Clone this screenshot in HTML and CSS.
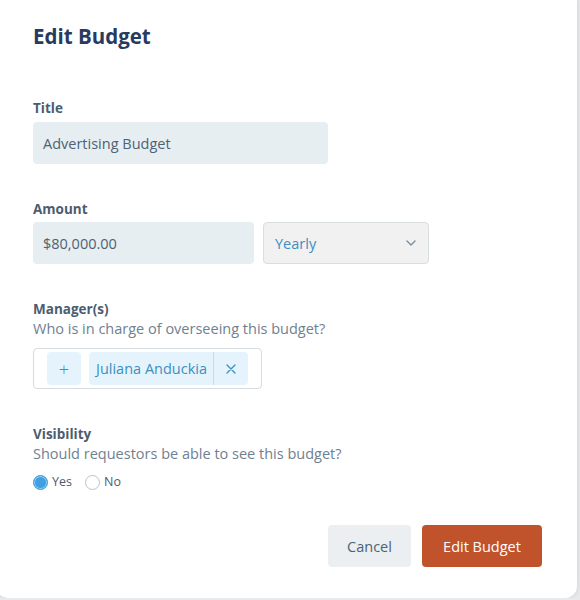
FILE: index.html
```html
<!DOCTYPE html>
<html lang="en">
<head>
  <meta charset="UTF-8" />
  <meta name="viewport" content="width=device-width, initial-scale=1.0"/>
  <title>Edit Budget</title>
  <link rel="stylesheet" href="styles.css">
</head>
<body>

  <!-- Edit budget dialog -->
  <div class="modal">
    <h2 class="modal-title">Edit Budget</h2>

    <div class="field">
      <label class="field-label">Title</label>
      <div class="input input-title">Advertising Budget</div>
    </div>

    <div class="field">
      <label class="field-label">Amount</label>
      <div class="amount-row">
        <div class="input input-amount">$80,000.00</div>
        <div class="select">
          <span>Yearly</span>
          <svg width="10" height="6" viewBox="0 0 10 6"><path d="M1 1l4 4 4-4" fill="none" stroke="#7d8c99" stroke-width="1.4" stroke-linecap="round" stroke-linejoin="round"/></svg>
        </div>
      </div>
    </div>

    <div class="field">
      <label class="field-label">Manager(s)</label>
      <p class="field-help">Who is in charge of overseeing this budget?</p>
      <div class="managers">
        <span class="chip chip-add">+</span>
        <span class="chip chip-person">
          <span class="chip-name">Juliana Anduckia</span>
          <span class="chip-remove">
            <svg width="10" height="10" viewBox="0 0 10 10"><path d="M1 1l8 8M9 1l-8 8" stroke="#3c8fbf" stroke-width="1.3" stroke-linecap="round"/></svg>
          </span>
        </span>
      </div>
    </div>

    <div class="field">
      <label class="field-label">Visibility</label>
      <p class="field-help">Should requestors be able to see this budget?</p>
      <div class="radios">
        <span class="radio"><span class="dot checked"></span>Yes</span>
        <span class="radio"><span class="dot"></span>No</span>
      </div>
    </div>

    <div class="actions">
      <button class="btn btn-cancel">Cancel</button>
      <button class="btn btn-primary">Edit Budget</button>
    </div>
  </div>

</body>
</html>
```

FILE: styles.css
```css
* {
  box-sizing: border-box;
}

body {
  margin: 0;
  font-family: 'Open Sans', 'Noto Sans', sans-serif;
  background-color: #e9eaeb;
  color: #4a5b6d;
  overflow: hidden;
}

/* Dialog */
.modal {
  width: 581px;
  height: 610px;
  margin: -12px 0 0 -4px;
  padding: 36px 0 0 37px;
  background-color: #fff;
  border-radius: 12px;
  box-shadow: 0 0 6px rgba(0, 0, 0, 0.12);
}

.modal-title {
  margin: 0;
  font-size: 20.5px;
  line-height: 24px;
  font-weight: 700;
  color: #283a5f;
}

/* Form fields */
.field {
  margin-top: 36px;
}

.modal-title + .field {
  margin-top: 51px;
}

.field-label {
  display: block;
  font-size: 13.5px;
  line-height: 18px;
  font-weight: 700;
  color: #4b5d6f;
}

.field-help {
  margin: 1px 0 0;
  font-size: 14.5px;
  line-height: 20px;
  color: #6f8191;
}

.input {
  margin-top: 5px;
  height: 42px;
  padding: 0 10px;
  display: flex;
  align-items: center;
  background-color: #e7eef2;
  border-radius: 4px;
  font-size: 14.5px;
  color: #4d6275;
}

.input-title {
  width: 295px;
}

.amount-row {
  display: flex;
  gap: 9px;
}

.input-amount {
  width: 221px;
  margin-top: 4px;
}

.select {
  margin-top: 4px;
  width: 166px;
  height: 42px;
  padding: 0 12px 0 11px;
  display: flex;
  align-items: center;
  justify-content: space-between;
  background-color: #f1f1f1;
  border: 1px solid #d9dee1;
  border-radius: 4px;
  font-size: 14.5px;
  color: #3c8fbf;
}

/* Manager chips */
.managers {
  margin-top: 9px;
  width: 229px;
  height: 41px;
  padding: 0 13px;
  display: flex;
  align-items: center;
  gap: 8px;
  border: 1px solid #d6dce0;
  border-radius: 4px;
}

.chip {
  height: 33px;
  display: flex;
  align-items: center;
  background-color: #e5f4fc;
  border-radius: 4px;
  color: #3c8fbf;
  font-size: 14.5px;
}

.chip-add {
  width: 34px;
  justify-content: center;
  font-size: 18px;
  font-weight: 300;
}

.chip-person {
  width: 159px;
}

.chip-name {
  padding: 0 6px 0 7px;
  height: 100%;
  display: flex;
  align-items: center;
  white-space: nowrap;
  border-right: 1px solid #b9e0f4;
}

.chip-remove {
  flex: 1;
  display: flex;
  justify-content: center;
}

/* Radios */
.radios {
  margin-top: 9px;
  display: flex;
  gap: 13px;
  font-size: 12.5px;
  line-height: 18px;
  color: #4b5d6f;
}

.radio {
  display: flex;
  align-items: center;
  gap: 4px;
}

.dot {
  width: 15px;
  height: 15px;
  border-radius: 50%;
  border: 1px solid #b9c3ca;
  background-color: #fff;
}

.dot.checked {
  background-color: #3f9fe0;
  border-color: #3f9fe0;
  box-shadow: inset 0 0 0 1px #9dd0f2;
}

/* Footer buttons */
.actions {
  margin-top: 34px;
  padding-right: 35px;
  display: flex;
  justify-content: flex-end;
  gap: 11px;
}

.btn {
  height: 42px;
  padding: 0;
  border: none;
  border-radius: 4px;
  font-family: inherit;
  font-size: 14.5px;
  cursor: pointer;
}

.btn-cancel {
  width: 83px;
  background-color: #eceff1;
  color: #4d6275;
}

.btn-primary {
  width: 120px;
  background-color: #c0522c;
  color: #fff;
}
```
